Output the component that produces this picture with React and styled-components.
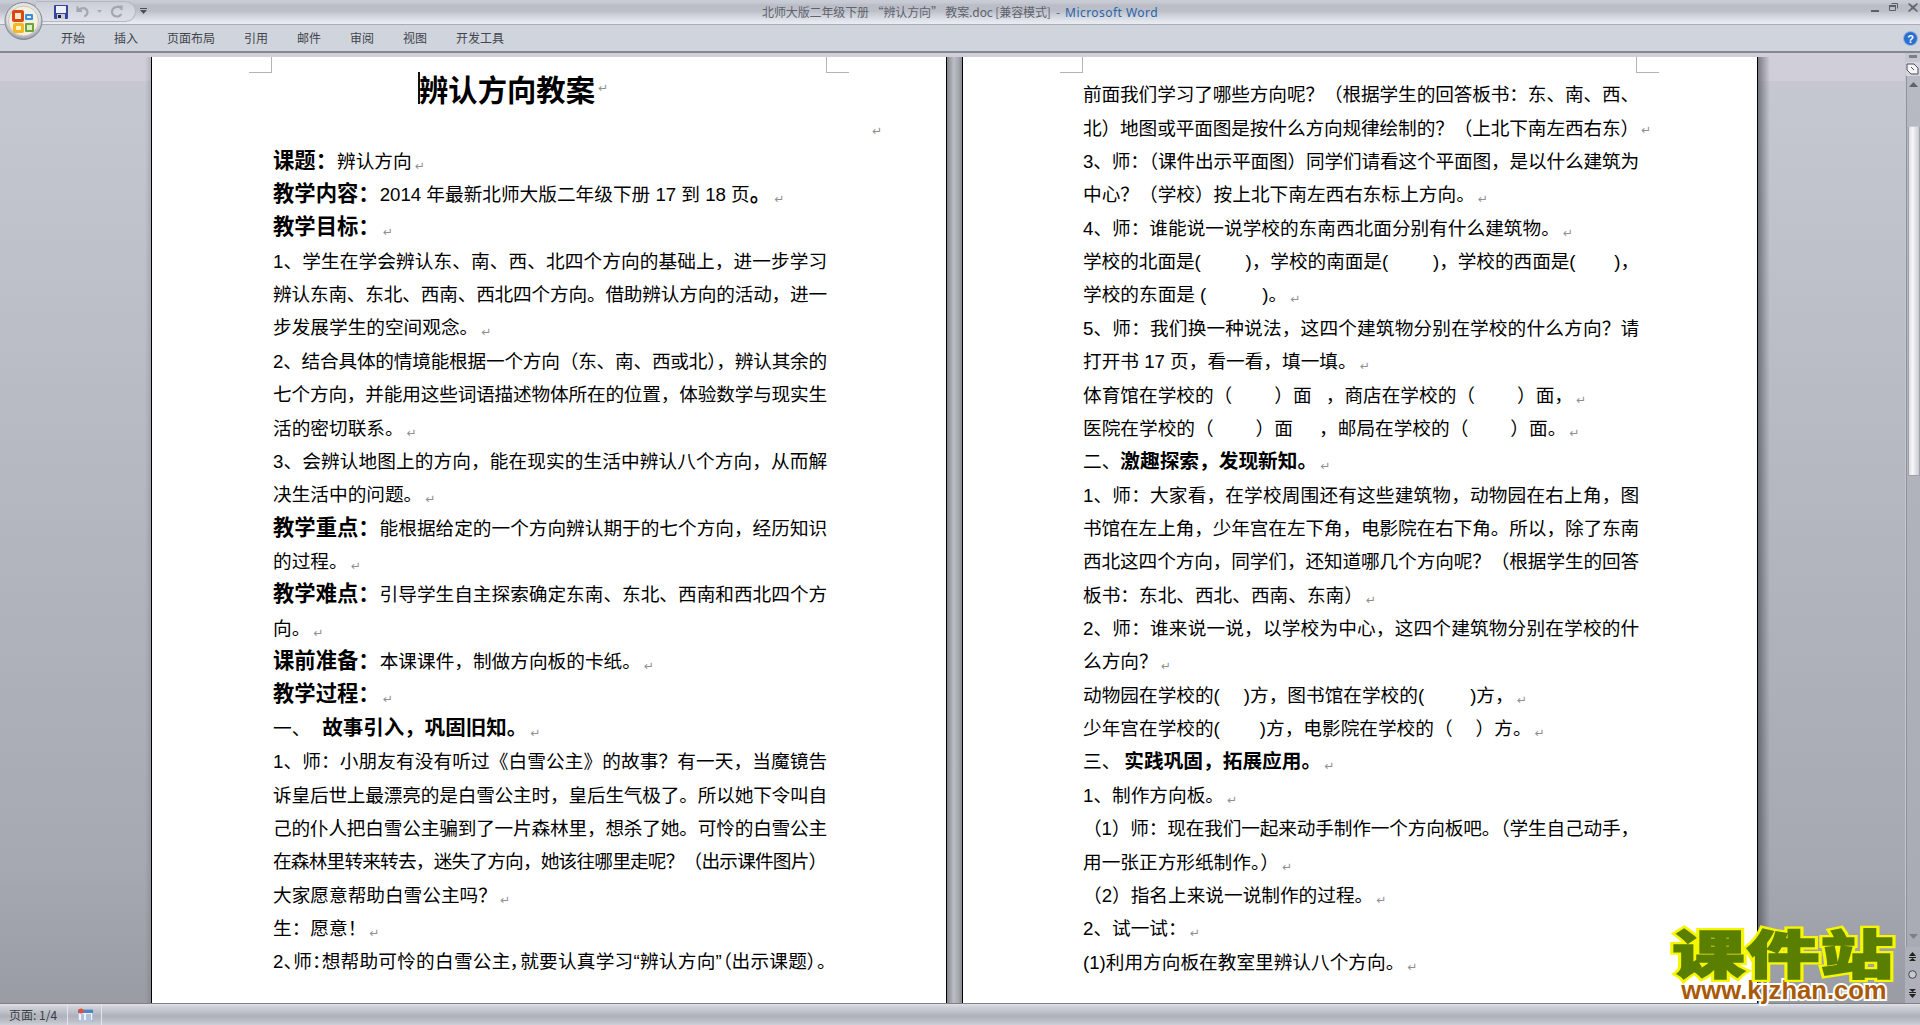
import React from 'react';
import styled, { createGlobalStyle } from 'styled-components';

const Global = createGlobalStyle`
  html, body { margin: 0; padding: 0; height: 100%; overflow: hidden; }
  body { font-family: "Liberation Sans", "Noto Sans CJK SC", sans-serif; color: #000; }
`;

const Shell = styled.div`
  position: relative; width: 1920px; height: 1025px; display: flex; flex-direction: column; overflow: hidden;
`;
const TitleBar = styled.header`
  height: 24px; border-bottom: 1px solid #a9acb6; display: grid; grid-template-columns: 1fr auto 1fr; align-items: stretch;
  background: linear-gradient(#c9cdd6 0, #c6c9d2 3px, #babdc6 5px, #bcbfc8 11px, #c8ccd5 14px, #d3d7df 17px, #dfe2e9 20px, #e9ecf2 24px);
`;
const TitleLeft = styled.div`
  display: flex; align-items: flex-start; padding: 1px 0 0 36px; gap: 4px;
`;
const WindowTitle = styled.div`
  font-family: "Noto Sans CJK SC", sans-serif; font-size: 12px; line-height: 24px; color: #5f636d; white-space: pre; letter-spacing: -0.12px;
`;
const AppName = styled.span`
  color: #2a64a8; font-family: "Noto Sans", sans-serif; letter-spacing: 0.45px;
`;
const WindowButtons = styled.div`
  display: flex; justify-content: flex-end; padding: 3px 2px 0 0; gap: 10px; align-items: flex-start;
`;
const QuickBar = styled.div`
  width: 100px; height: 21px; box-sizing: border-box; padding-left: 18px; flex: none;
  display: flex; align-items: center; gap: 8px;
  border: 1px solid #b4b8c2; border-left: 0; border-radius: 0 12px 12px 0;
  background: linear-gradient(#cbced7, #d4d7df 45%, #dde0e7);
`;
const CustomizeArrow = styled.svg`
  flex: none; margin-top: 7px;
`;
const OfficeOrb = styled.svg`
  position: absolute; left: 4px; top: 2px; z-index: 3;
`;
const TabRow = styled.nav`
  height: 26px; border-bottom: 2px solid #85888f; background: #d0d4dd; display: flex; align-items: center; padding: 0 2px 0 61px; gap: 29px;
`;
const Tab = styled.span`
  font-family: "Noto Sans CJK SC", sans-serif; font-size: 12px; color: #40444b; line-height: 26px;
`;
const HelpIcon = styled.svg`
  margin-left: auto;
`;
const Workspace = styled.main`
  flex: 1; min-height: 0; display: flex; padding-top: 4px; overflow: hidden;
  background: linear-gradient(#d0ced8 0, #cfcdd7 28px, #c5c8d0 28px, #b3b6be 50%, #a6a9b1 85%, #999ca3 100%);
`;
const LeftGutter = styled.div`
  width: 151px; flex: none;
  background: linear-gradient(90deg, transparent 145px, rgba(60, 62, 70, .18) 151px);
`;
const Page = styled.article`
  flex: none; position: relative; box-sizing: content-box; width: 794px; background: #fff;
  border-left: 1px solid #000; border-right: 1px solid #000; overflow: hidden;
  padding-top: ${p => p.$top}px;
`;
const PageGap = styled.div`
  width: 15px; flex: none;
  background: linear-gradient(90deg, #83858d, #bcbec6 45%, #a8aab2 75%, #888a92);
`;
const RightGutter = styled.div`
  flex: 1; min-width: 0;
  background: linear-gradient(90deg, rgba(50, 52, 60, .55), rgba(60, 62, 70, 0) 12px);
`;
const Column = styled.div`
  margin-left: ${p => p.$left}px; width: ${p => p.$width}px;
`;
const TitleLine = styled.h1`
  margin: 0; padding-left: 145px; height: 38px; line-height: 38px; font-size: 29.33px; font-weight: 700;
  font-family: "Noto Sans CJK SC", sans-serif; white-space: nowrap; display: flex; align-items: center;
`;
const Caret = styled.i`
  flex: none; width: 2px; height: 32px; background: #111; margin-right: -1px;
`;
const LonePilcrow = styled.div`
  height: 37.7px; box-sizing: border-box; padding-top: 10px; display: flex; justify-content: flex-end; align-items: center; margin-right: -56px;
`;
const Line = styled.div`
  position: relative; height: 33.36px; line-height: 33.36px; font-size: 18.67px; color: #000; white-space: pre-wrap;
  ${p => p.$fit && `text-align: justify; text-align-last: justify; letter-spacing: -1.2px;`}
  ${p => p.$tight && `text-align: justify; text-align-last: justify; font-feature-settings: "palt";`}
`;
const Strong = styled.strong`
  font-weight: 700; font-family: "Noto Sans CJK SC", sans-serif; font-size: ${p => p.$size || 21.33}px; line-height: 1;
`;
const Blank = styled.span`
  display: inline-block; width: ${p => p.$w}px;
`;
const Pilcrow = styled.span`
  font-family: "DejaVu Sans", sans-serif; font-size: 12px; color: #8f8f8f; margin-left: 3px; font-weight: 400; vertical-align: -2px; line-height: 1; letter-spacing: 0;
`;
const HangingPilcrow = styled(Pilcrow)`
  position: absolute; right: -13px; top: 12px; margin: 0;
`;
const CropMark = styled.i`
  position: absolute; top: 0; width: 23px; height: 16px; box-sizing: border-box; border-bottom: 1px solid #b3b3bb;
  left: ${p => p.$x}px;
  ${p => p.$side === 'left' ? `border-right: 1px solid #b3b3bb;` : `border-left: 1px solid #b3b3bb;`}
`;
const Scrollbar = styled.aside`
  width: 15px; flex: none; display: flex; flex-direction: column; align-items: center; margin-top: -4px;
  background: #c4c7cf;
`;
const SplitDash = styled.i`
  width: 8px; height: 3px; background: #7c7f86; margin-top: 2px; margin-bottom: 4px; flex: none;
`;
const RulerButton = styled.div`
  width: 14px; height: 14px; background: #d6d4dc; display: flex; align-items: center; justify-content: center; flex: none;
`;
const Track = styled.div`
  flex: 1; min-height: 0; width: 14px; box-sizing: border-box; margin-left: 1px; border-left: 1px solid #8e9198; background: linear-gradient(#b7bac2, #a8abb3);
  display: flex; flex-direction: column; align-items: center;
`;
const Arrow = styled.svg`
  flex: none; margin: ${p => p.$m};
`;
const Thumb = styled.div`
  width: 12px; height: 350px; flex: none; margin-top: 39px; border: 1px solid #9fa2aa; border-top-color: #c8cad0; box-sizing: border-box; border-radius: 2px 2px 0 0;
  background: linear-gradient(90deg, #dcdde3, #f7f7f9 35%, #e2e2e8 65%, #c9c9d2);
`;
const TrackSpace = styled.div` flex: 1; `;
const BrowseControls = styled.div`
  height: 56px; flex: none; width: 15px; display: flex; flex-direction: column; align-items: center; justify-content: space-around; background: #aeb1b9;
`;
const StatusBar = styled.footer`
  height: 22px; flex: none; display: flex; align-items: stretch; border-top: 1px solid #7f8188; box-sizing: border-box;
  background: linear-gradient(#dfe1e6 0, #cdd0d7 3px, #bec1c9 8px, #aeb1b9 12px, #bcbfc7 17px, #cdd0d8 21px);
`;
const StatusCell = styled.div`
  width: ${p => p.$w}px; box-sizing: border-box; padding-left: ${p => p.$pad}px; display: flex; align-items: center;
  border-right: 1px solid #e3e4e9; font-family: "Noto Sans CJK SC", sans-serif; font-size: 12px; color: #3a3d44; white-space: pre;
`;
const Watermark = styled.div`
  position: absolute; left: 1666px; top: 926px; width: 236px; z-index: 5; display: flex; flex-direction: column; align-items: center; pointer-events: none;
`;
const BrandCn = styled.div`
  position: relative; font-family: "Noto Sans CJK SC", sans-serif; font-weight: 900; font-size: 52px; line-height: 52px; letter-spacing: 1px; white-space: nowrap;
  color: #f6f600; -webkit-text-stroke: 6px #f6f600; transform: scaleX(1.4);
  &::after {
    content: "课件站"; position: absolute; left: 0; top: 0; color: #5a7f00; -webkit-text-stroke: 1.5px #5a7f00;
  }
`;
const BrandUrl = styled.div`
  font-family: "Liberation Sans", sans-serif; font-weight: 700; font-size: 25.6px; line-height: 25px; white-space: nowrap;
  color: #a85a08; -webkit-text-stroke: 4px #fff; paint-order: stroke fill;
`;

const Save = () => (
  <svg width="14" height="14" viewBox="0 0 14 14">
    <rect width="14" height="14" rx="1" fill="#34439c" />
    <rect x="2" y="1" width="10" height="7" fill="#eef0f8" />
    <rect x="3" y="9" width="8" height="5" fill="#c9ccd6" />
    <rect x="4" y="10" width="3" height="3" fill="#1a1c28" />
  </svg>
);
const Undo = () => (
  <svg width="13" height="13" viewBox="0 0 13 13" fill="none">
    <path d="M1.500 1.500v4.500h4.500M2 5.500C5 2.500 9 2.500 10.800 5c1.500 2.200.5 5.500-2.500 6.500" stroke="#a3a6af" strokeWidth="2.200" />
  </svg>
);
const Redo = () => (
  <svg width="13" height="13" viewBox="0 0 13 13" fill="none">
    <path d="M8 1.500h3.500V5M10.500 2.500C7 .8 2.500 2.500 2 6.500c-.3 3 2.300 5 5 5 2 0 3.500-1 4.200-2.500" stroke="#a3a6af" strokeWidth="2.200" />
  </svg>
);
const Tiny = () => <svg width="5" height="3" viewBox="0 0 5 3"><path d="M0 0h5L2.500 3z" fill="#a8abb4" /></svg>;

const P = () => <Pilcrow>↵</Pilcrow>;

export default function App() {
  return (
    <Shell>
      <Global />
      <TitleBar>
        <TitleLeft>
          <QuickBar>
            <Save /><Undo /><Tiny /><Redo />
          </QuickBar>
          <CustomizeArrow width="7" height="6" viewBox="0 0 7 6"><path d="M0 0h7v1H0zM0 2h7L3.500 6z" fill="#4c4f57" /></CustomizeArrow>
        </TitleLeft>
        <WindowTitle>北师大版二年级下册 “辨认方向” 教案.doc [兼容模式]  -  <AppName>Microsoft Word</AppName></WindowTitle>
        <WindowButtons>
          <svg width="8" height="10" viewBox="0 0 8 10"><rect y="7" width="8" height="2" fill="#5b5f68" /></svg>
          <svg width="9" height="8" viewBox="0 0 9 8" fill="none"><path d="M2.500.5h6v5M.5 2.500h6v5h-6z" stroke="#5b5f68" /><rect y="2" width="7" height="2" fill="#5b5f68" /></svg>
          <svg width="10" height="9" viewBox="0 0 10 9"><path d="M1 0l4 3 4-3 1 1-3.500 3.500L10 8 9 9 5 6 1 9 0 8l3.500-3.500L0 1z" fill="#646870" /></svg>
        </WindowButtons>
      </TitleBar>
      <OfficeOrb width="39" height="39" viewBox="0 0 39 39">
        <defs>
          <radialGradient id="orbRim" cx="50%" cy="40%" r="60%">
            <stop offset="0" stopColor="#fff" /><stop offset=".75" stopColor="#dcdde2" /><stop offset="1" stopColor="#8e9098" />
          </radialGradient>
        </defs>
        <circle cx="19.500" cy="19" r="18.500" fill="url(#orbRim)" stroke="#83868e" />
        <circle cx="19.500" cy="19" r="15" fill="#f4efe0" stroke="#c8c4b4" />
        <rect x="8" y="8" width="12" height="12" rx="2" fill="#d9480f" /><rect x="11" y="11" width="6" height="6" fill="#fde7cf" />
        <rect x="21" y="12" width="8" height="6" rx="1" fill="#3a8fd6" /><rect x="23" y="14" width="4" height="2" fill="#d9ecfa" />
        <rect x="9" y="21" width="11" height="10" rx="2" fill="#f5b81f" /><rect x="12" y="24" width="5" height="4" fill="#fff3c8" />
        <rect x="21" y="21" width="9" height="9" rx="1" fill="#6ba63a" /><rect x="23" y="23" width="5" height="5" fill="#dfeec9" />
      </OfficeOrb>
      <TabRow>
        {['开始', '插入', '页面布局', '引用', '邮件', '审阅', '视图', '开发工具'].map(t => <Tab key={t}>{t}</Tab>)}
        <HelpIcon width="15" height="15" viewBox="0 0 15 15">
          <circle cx="7.500" cy="7.500" r="7" fill="#2a6fd0" stroke="#9fb9dc" />
          <text x="7.500" y="11.500" textAnchor="middle" fontSize="11" fontWeight="700" fontFamily="Liberation Sans" fill="#fff">?</text>
        </HelpIcon>
      </TabRow>
      <Workspace>
        <LeftGutter />
        <Page $top={12}>
          <CropMark $side="left" $x={97} />
          <CropMark $side="right" $x={674} />
          <Column $left={121} $width={553}>
            <TitleLine><Caret />辨认方向教案<P /></TitleLine>
            <LonePilcrow><P /></LonePilcrow>
            <Line><Strong>课题：</Strong>辨认方向<P /></Line>
            <Line><Strong>教学内容：</Strong>2014 年最新北师大版二年级下册 17 到 18 页<Strong>。</Strong><P /></Line>
            <Line><Strong>教学目标：</Strong><P /></Line>
            <Line $fit>1、学生在学会辨认东、南、西、北四个方向的基础上，进一步学习</Line>
            <Line $fit>辨认东南、东北、西南、西北四个方向。借助辨认方向的活动，进一</Line>
            <Line>步发展学生的空间观念。<P /></Line>
            <Line $fit>2、结合具体的情境能根据一个方向（东、南、西或北），辨认其余的</Line>
            <Line $fit>七个方向，并能用这些词语描述物体所在的位置，体验数学与现实生</Line>
            <Line>活的密切联系。<P /></Line>
            <Line $fit>3、会辨认地图上的方向，能在现实的生活中辨认八个方向，从而解</Line>
            <Line>决生活中的问题。<P /></Line>
            <Line $fit><Strong>教学重点：</Strong>能根据给定的一个方向辨认期于的七个方向，经历知识</Line>
            <Line>的过程。<P /></Line>
            <Line $fit><Strong>教学难点：</Strong>引导学生自主探索确定东南、东北、西南和西北四个方</Line>
            <Line>向。<P /></Line>
            <Line><Strong>课前准备：</Strong>本课课件，制做方向板的卡纸。<P /></Line>
            <Line><Strong>教学过程：</Strong><P /></Line>
            <Line>一、<Blank $w={12} /><Strong $size={20.5}>故事引入，巩固旧知。</Strong><P /></Line>
            <Line $fit>1、师：小朋友有没有听过《白雪公主》的故事？有一天，当魔镜告</Line>
            <Line $fit>诉皇后世上最漂亮的是白雪公主时，皇后生气极了。所以她下令叫自</Line>
            <Line $fit>己的仆人把白雪公主骗到了一片森林里，想杀了她。可怜的白雪公主</Line>
            <Line $fit>在森林里转来转去，迷失了方向，她该往哪里走呢？（出示课件图片）</Line>
            <Line>大家愿意帮助白雪公主吗？<P /></Line>
            <Line>生：愿意！<P /></Line>
            <Line $tight>2、师：想帮助可怜的白雪公主，就要认真学习“辨认方向”（出示课题）。</Line>
          </Column>
        </Page>
        <PageGap />
        <Page $top={21.3}>
          <CropMark $side="left" $x={97} />
          <CropMark $side="right" $x={673} />
          <Column $left={120} $width={555}>
            <Line $fit>前面我们学习了哪些方向呢？（根据学生的回答板书：东、南、西、</Line>
            <Line $fit>北）地图或平面图是按什么方向规律绘制的？（上北下南左西右东）<HangingPilcrow>↵</HangingPilcrow></Line>
            <Line $fit>3、师：（课件出示平面图）同学们请看这个平面图，是以什么建筑为</Line>
            <Line>中心？（学校）按上北下南左西右东标上方向。<P /></Line>
            <Line>4、师：谁能说一说学校的东南西北面分别有什么建筑物。<P /></Line>
            <Line $fit>学校的北面是(<Blank $w={46} />)，学校的南面是(<Blank $w={46} />)，学校的西面是(<Blank $w={40} />)，</Line>
            <Line>学校的东面是 (<Blank $w={56} />)。<P /></Line>
            <Line $fit>5、师：我们换一种说法，这四个建筑物分别在学校的什么方向？请</Line>
            <Line>打开书 17 页，看一看，填一填。<P /></Line>
            <Line>体育馆在学校的（<Blank $w={42} />）面<Blank $w={9} /> ，商店在学校的（<Blank $w={42} />）面，<P /></Line>
            <Line>医院在学校的（<Blank $w={42} />）面<Blank $w={21} /> ，邮局在学校的（<Blank $w={42} />）面。<P /></Line>
            <Line>二、<Strong $size={19.7}>激趣探索，发现新知。</Strong><P /></Line>
            <Line $fit>1、师：大家看，在学校周围还有这些建筑物，动物园在右上角，图</Line>
            <Line $fit>书馆在左上角，少年宫在左下角，电影院在右下角。所以，除了东南</Line>
            <Line $fit>西北这四个方向，同学们，还知道哪几个方向呢？（根据学生的回答</Line>
            <Line>板书：东北、西北、西南、东南）<P /></Line>
            <Line $fit>2、师：谁来说一说，以学校为中心，这四个建筑物分别在学校的什</Line>
            <Line>么方向？<P /></Line>
            <Line>动物园在学校的(<Blank $w={24} />)方，图书馆在学校的(<Blank $w={46} />)方，<P /></Line>
            <Line>少年宫在学校的(<Blank $w={40} />)方，电影院在学校的（<Blank $w={23} />）方。<P /></Line>
            <Line>三、<Blank $w={4} /><Strong $size={19.7}>实践巩固，拓展应用。</Strong><P /></Line>
            <Line>1、制作方向板。<P /></Line>
            <Line $fit>（1）师：现在我们一起来动手制作一个方向板吧。（学生自己动手，</Line>
            <Line>用一张正方形纸制作。）<P /></Line>
            <Line>（2）指名上来说一说制作的过程。<P /></Line>
            <Line>2、试一试：<P /></Line>
            <Line>(1)利用方向板在教室里辨认八个方向。<P /></Line>
          </Column>
        </Page>
        <RightGutter />
        <Scrollbar>
          <SplitDash />
          <RulerButton>
            <svg width="13" height="12" viewBox="0 0 13 12"><path d="M1 1h7l4 4v6H5L1 7z" fill="#f4f4f7" stroke="#4c4f56" /><path d="M5 4l3 3" stroke="#4c4f56" /></svg>
          </RulerButton>
          <Track>
            <Arrow $m="6px 0 0" width="9" height="5" viewBox="0 0 9 5"><path d="M4.500 0L9 5H0z" fill="#5f626a" /></Arrow>
            <Thumb />
            <TrackSpace />
            <Arrow $m="0 0 8px" width="9" height="5" viewBox="0 0 9 5"><path d="M0 0h9L4.500 5z" fill="#7c7f87" /></Arrow>
          </Track>
          <BrowseControls>
            <svg width="9" height="9" viewBox="0 0 9 9"><path d="M4.500 0L8 4H1zM1 5h7v1H1zM4.500 6L8 9H1z" fill="#222" /></svg>
            <svg width="9" height="9" viewBox="0 0 9 9"><circle cx="4.500" cy="4.500" r="3.800" fill="#c9c9cd" stroke="#44464c" /></svg>
            <svg width="9" height="9" viewBox="0 0 9 9"><path d="M1 0h7L4.500 3zM1 3h7v1H1zM1 5h7L4.500 9z" fill="#222" /></svg>
          </BrowseControls>
        </Scrollbar>
      </Workspace>
      <StatusBar>
        <StatusCell $w={68} $pad={9}>页面: 1/4</StatusCell>
        <StatusCell $w={34} $pad={10}>
          <svg width="15" height="13" viewBox="0 0 15 13">
            <rect y="2" width="15" height="11" fill="#eef3fb" stroke="#5a86c4" strokeWidth=".8" />
            <rect y="2" width="15" height="3" fill="#4f83c9" />
            <path d="M3 7h3M8 7h5M3 9h3M8 9h5M3 11h3M8 11h5" stroke="#7a93b8" />
            <circle cx="3" cy="3" r="2.600" fill="#e0503c" />
          </svg>
        </StatusCell>
      </StatusBar>
      <Watermark>
        <BrandCn>课件站</BrandCn>
        <BrandUrl>www.kjzhan.com</BrandUrl>
      </Watermark>
    </Shell>
  );
}
